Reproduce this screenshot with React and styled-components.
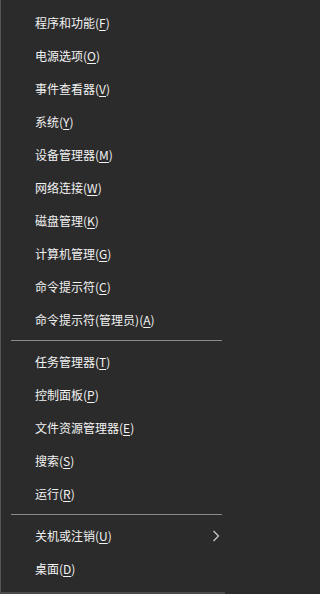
import React from "react";
import styled, { createGlobalStyle } from "styled-components";

const Global = createGlobalStyle`
  html, body { margin: 0; padding: 0; background: #2b2b2b; }
  body { font-family: "Noto Sans CJK SC", "Noto Sans", sans-serif; }
`;

const Menu = styled.div`
  box-sizing: border-box;
  width: 225px;
  height: 594px;
  background: #2b2b2b;
  border-left: 1px solid #555555;
  border-bottom: 2px solid #4a4a4a;
  padding-top: 6px;
  display: flex;
  flex-direction: column;
`;

const Item = styled.div`
  height: 33px;
  display: flex;
  align-items: center;
  justify-content: space-between;
  padding-left: 34px;
  padding-right: 5px;
  color: #f2f2f2;
  font-size: 12px;
  line-height: 1;
  white-space: nowrap;
`;

const Key = styled.span`
  text-decoration: underline;
  text-underline-offset: 2px;
  text-decoration-thickness: 1px;
`;

const Separator = styled.div`
  height: 1px;
  margin: 4px 3px 4px 10px;
  background: #8a8a8a;
`;

const Chevron = () => (
  <svg width="8" height="12" viewBox="0 0 8 12">
    <path d="M1.5 1 L6.5 6 L1.5 11" fill="none" stroke="#cfcfcf" strokeWidth="1.2" />
  </svg>
);

const groups = [
  [
    ["程序和功能", "F"],
    ["电源选项", "O"],
    ["事件查看器", "V"],
    ["系统", "Y"],
    ["设备管理器", "M"],
    ["网络连接", "W"],
    ["磁盘管理", "K"],
    ["计算机管理", "G"],
    ["命令提示符", "C"],
    ["命令提示符(管理员)", "A"],
  ],
  [
    ["任务管理器", "T"],
    ["控制面板", "P"],
    ["文件资源管理器", "E"],
    ["搜索", "S"],
    ["运行", "R"],
  ],
  [
    ["关机或注销", "U", true],
    ["桌面", "D"],
  ],
];

export default function App() {
  return (
    <>
      <Global />
      <Menu>
        {groups.map((g, gi) => (
          <React.Fragment key={gi}>
            {gi > 0 && <Separator />}
            {g.map(([label, key, sub]) => (
              <Item key={label}>
                <span>
                  {label}(<Key>{key}</Key>)
                </span>
                {sub && <Chevron />}
              </Item>
            ))}
          </React.Fragment>
        ))}
      </Menu>
    </>
  );
}
